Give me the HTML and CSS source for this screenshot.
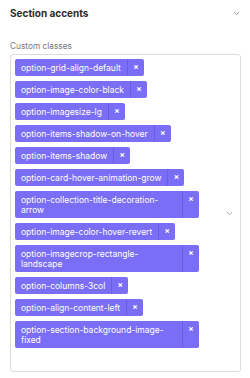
FILE: index.html
```html
<!DOCTYPE html>
<html lang="en">
<head>
    <meta charset="UTF-8">
    <meta name="viewport" content="width=device-width, initial-scale=1.0">
    <title>Section accents</title>
    <link rel="stylesheet" href="styles.css">
</head>
<body>

    <div class="panel">
        <div class="section-head">
            <h2>Section accents</h2>
            <svg class="chevron" width="7" height="5" viewBox="0 0 7 5"><path d="M1 1.2 L3.5 3.6 L6 1.2" fill="none" stroke="#999" stroke-width="1"/></svg>
        </div>

        <label class="field-label">Custom classes</label>
        <div class="multi-select">
            <div class="tags">
                <div class="tag"><span class="tag-text">option-grid-align-default</span><span class="tag-remove">×</span></div>
                <div class="tag"><span class="tag-text">option-image-color-black</span><span class="tag-remove">×</span></div>
                <div class="tag"><span class="tag-text">option-imagesize-lg</span><span class="tag-remove">×</span></div>
                <div class="tag"><span class="tag-text">option-items-shadow-on-hover</span><span class="tag-remove">×</span></div>
                <div class="tag"><span class="tag-text">option-items-shadow</span><span class="tag-remove">×</span></div>
                <div class="tag"><span class="tag-text">option-card-hover-animation-grow</span><span class="tag-remove">×</span></div>
                <div class="tag"><span class="tag-text">option-collection-title-decoration-arrow</span><span class="tag-remove">×</span></div>
                <div class="tag"><span class="tag-text">option-image-color-hover-revert</span><span class="tag-remove">×</span></div>
                <div class="tag"><span class="tag-text">option-imagecrop-rectangle-landscape</span><span class="tag-remove">×</span></div>
                <div class="tag"><span class="tag-text">option-columns-3col</span><span class="tag-remove">×</span></div>
                <div class="tag"><span class="tag-text">option-align-content-left</span><span class="tag-remove">×</span></div>
                <div class="tag"><span class="tag-text">option-section-background-image-fixed</span><span class="tag-remove">×</span></div>
            </div>
            <svg class="chevron" width="7" height="5" viewBox="0 0 7 5"><path d="M1 1.2 L3.5 3.6 L6 1.2" fill="none" stroke="#aaa" stroke-width="1"/></svg>
        </div>
    </div>

</body>
</html>
```

FILE: styles.css
```css
body {
    font-family: Inter, "Noto Sans", sans-serif;
    margin: 0;
    padding: 0;
    background-color: #fff;
    color: #333;
}

.panel {
    padding: 0 9px 0 10px;
}

.section-head {
    display: flex;
    justify-content: space-between;
    align-items: center;
    height: 26px;
}

.section-head h2 {
    font-size: 10px;
    font-weight: 700;
    margin: 0;
    color: #2b2b2b;
}

.section-head .chevron {
    margin-right: 1px;
}

.field-label {
    display: block;
    margin-top: 13px;
    font-size: 8.3px;
    line-height: 14px;
    color: #777;
}

.multi-select {
    display: flex;
    align-items: center;
    margin-top: 1px;
    height: 318px;
    box-sizing: border-box;
    border: 1px solid #dcdcdc;
    border-radius: 3px;
    padding: 0 7px 0 4px;
}

.tags {
    display: flex;
    flex-direction: column;
    align-items: flex-start;
    gap: 4.5px;
    width: 184px;
    align-self: flex-start;
    padding-top: 3.5px;
}

.multi-select .chevron {
    margin-left: auto;
}

.tag {
    display: flex;
    background-color: #7b6ef6;
    color: #fff;
    border-radius: 2px;
    font-size: 8.5px;
    line-height: 10px;
}

.tag-text {
    padding: 4px 6px 3.5px 6px;
}

.tag-remove {
    width: 16px;
    flex-shrink: 0;
    text-align: center;
    border-left: 1px solid rgba(60, 40, 160, 0.25);
    padding-top: 3.5px;
    font-size: 8px;
    font-weight: 700;
}
```
